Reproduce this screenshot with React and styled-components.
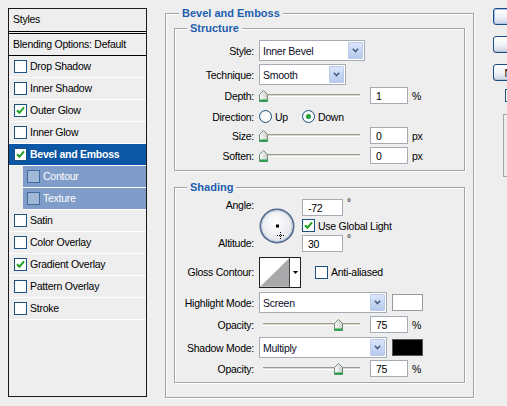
import React from 'react';
import styled, { createGlobalStyle } from 'styled-components';

const Global = createGlobalStyle`
  html, body { margin: 0; padding: 0; background: #eeeeee; overflow: hidden; }
  body { font-family: "Liberation Sans", Arial, sans-serif; font-size: 10.5px; letter-spacing: -0.25px; color: #000; }
  #root { width: 507px; height: 406px; overflow: hidden; }
`;

const Page = styled.div`
  display: flex;
  align-items: flex-start;
  width: 507px;
  height: 406px;
  overflow: hidden;
  background: #eeeeee;
`;

/* ---------- left styles list ---------- */
const StylesPanel = styled.div`
  margin: 8px 0 0 8px;
  width: 139px;
  height: 389px;
  flex: none;
  box-sizing: border-box;
  border: 1px solid #1a1a1a;
  display: flex;
  flex-direction: column;
`;

const HeadRow = styled.div`
  height: ${p => (p.$double ? 25 : 22)}px;
  box-sizing: border-box;
  padding: 0 0 ${p => (p.$double ? 2 : 1)}px 4px;
  display: flex;
  align-items: center;
  border-bottom: ${p => (p.$double ? '3px double #000' : '1px solid #000')};
  white-space: nowrap;
`;

const ListRow = styled.div`
  height: 22px;
  box-sizing: border-box;
  border-bottom: 1px solid #ffffff;
  display: flex;
  align-items: center;
  gap: 3px;
  padding-left: ${p => (p.$sub ? 4 : 5)}px;
  padding-bottom: 1px;
  margin-left: ${p => (p.$sub ? 14 : 0)}px;
  background: ${p => (p.$selected ? '#0b56a5' : p.$sub ? '#7f9dc8' : 'transparent')};
  color: ${p => (p.$selected || p.$sub ? '#ffffff' : '#000')};
  font-weight: ${p => (p.$selected ? 'bold' : 'normal')};
  white-space: nowrap;
`;

const CheckBox = styled.span`
  width: 13px;
  height: 13px;
  flex: none;
  box-sizing: border-box;
  border: 1px solid ${p => (p.$dim ? '#3e6aa0' : '#1c5180')};
  background: ${p => (p.$dim ? 'rgba(255,255,255,0.28)' : '#ffffff')};
  display: flex;
  align-items: center;
  justify-content: center;
`;

const Tick = () => (
  <svg width="9" height="9" viewBox="0 0 9 9">
    <path d="M1 4.2 L3.4 6.8 L8 1.4" fill="none" stroke="#1fa01f" strokeWidth="2" />
  </svg>
);

const Check = ({ checked, dim }) => (
  <CheckBox $dim={dim}>{checked && <Tick />}</CheckBox>
);

/* ---------- group boxes ---------- */
const Group = styled.fieldset`
  box-sizing: border-box;
  margin: 0;
  min-width: 0;
  border: 1px solid #a3a3a3;
  box-shadow: inset 1px 1px 0 #ffffff, 1px 1px 0 #ffffff;
`;

const MainGroup = styled(Group)`
  flex: none;
  margin: 6px 0 0 18px;
  width: 309px;
  height: 392px;
  padding: 0 8px;
`;

const SubGroup = styled(Group)`
  width: 100%;
  height: ${p => p.$h}px;
  margin-top: ${p => p.$mt}px;
  padding: 0;
`;

const Title = styled.legend`
  color: #1e5eae;
  font-weight: bold;
  font-size: 11px;
  letter-spacing: 0;
  line-height: 14px;
  padding: 0 3px;
  margin-left: ${p => p.$ml}px;
  background: #eeeeee;
`;

const Row = styled.div`
  display: flex;
  align-items: center;
  height: ${p => p.$h}px;
  margin-top: ${p => p.$mt}px;
`;

const Label = styled.span`
  width: 79px;
  margin-right: 5px;
  flex: none;
  text-align: right;
  white-space: nowrap;
`;

/* select */
const SelectBox = styled.div`
  width: ${p => p.$w}px;
  height: 21px;
  flex: none;
  box-sizing: border-box;
  border: 1px solid #a5acb5;
  background: #fff;
  display: flex;
  align-items: stretch;
`;
const SelectText = styled.span`
  flex: 1;
  padding-left: 3px;
  display: flex;
  align-items: center;
  color: #0c0c2a;
`;
const DropBtn = styled.span`
  width: 15px;
  margin: 1px;
  box-sizing: border-box;
  border: 1px solid #b9cbe8;
  border-radius: 1px;
  background: linear-gradient(#dbe6fa, #b6caee);
  display: flex;
  align-items: center;
  justify-content: center;
`;
const Chevron = () => (
  <svg width="7" height="5" viewBox="0 0 7 5">
    <path d="M0.8 0.8 L3.5 3.6 L6.2 0.8" fill="none" stroke="#4a5d82" strokeWidth="1.6" />
  </svg>
);
const Select = ({ w, children }) => (
  <SelectBox $w={w}>
    <SelectText>{children}</SelectText>
    <DropBtn><Chevron /></DropBtn>
  </SelectBox>
);

/* numeric field */
const Field = styled.div`
  width: ${p => p.$w}px;
  height: 17px;
  flex: none;
  box-sizing: border-box;
  border: 1px solid #a5acb5;
  background: #fff;
  padding-left: 5px;
  display: flex;
  align-items: center;
`;
const Unit = styled.span`
  margin-left: 4px;
  align-self: ${p => (p.$sup ? 'flex-start' : 'center')};
  font-size: ${p => (p.$sup ? '10px' : 'inherit')};
  margin-top: ${p => (p.$sup ? '-2px' : '0')};
`;

/* slider */
const Slider = styled.div`
  position: relative;
  width: 101px;
  height: 17px;
  flex: none;
  margin-right: 10px;
`;
const Track = styled.div`
  position: absolute;
  left: 4px;
  right: 0;
  top: 7px;
  height: 3px;
  box-sizing: border-box;
  border-top: 1px solid #9c9c93;
  border-bottom: 1px solid #ffffff;
  background: #d8d8cf;
`;
const ThumbWrap = styled.div`
  position: absolute;
  top: 3px;
  width: 9px;
  height: 12px;
`;
const Thumb = ({ pct }) => (
  <ThumbWrap style={{ left: `${4 + pct - 4.5}px` }}>
    <svg width="9" height="12" viewBox="0 0 9 12">
      <defs>
        <linearGradient id="tg" x1="0" y1="0" x2="1" y2="0">
          <stop offset="0" stopColor="#ffffff" />
          <stop offset="1" stopColor="#c9cdc9" />
        </linearGradient>
      </defs>
      <path d="M4.5 0.5 L8.5 4.5 L8.5 11.5 L0.5 11.5 L0.5 4.5 Z" fill="url(#tg)" stroke="#6f8a78" />
      <rect x="0.5" y="9.5" width="8" height="2" fill="#21a34a" />
    </svg>
  </ThumbWrap>
);

const SliderRow = ({ label, pct, value, unit, mt }) => (
  <Row $h={17} $mt={mt}>
    <Label>{label}</Label>
    <Slider>
      <Track />
      <Thumb pct={pct} />
    </Slider>
    <Field $w={38}>{value}</Field>
    <Unit>{unit}</Unit>
  </Row>
);

/* radio */
const RadioCircle = styled.span`
  width: 13px;
  height: 13px;
  flex: none;
  box-sizing: border-box;
  border: 1px solid #1c5180;
  border-radius: 50%;
  background: radial-gradient(circle at 60% 60%, #ffffff, #ececec);
  display: flex;
  align-items: center;
  justify-content: center;
  margin-right: 3px;
`;
const RadioDot = styled.span`
  width: 5px;
  height: 5px;
  border-radius: 50%;
  background: #22a03a;
`;
const RadioText = styled.span`
  margin-right: ${p => p.$gap}px;
`;

/* check with text */
const CheckLine = styled.div`
  display: flex;
  align-items: center;
  gap: ${p => p.$gap}px;
  margin-left: ${p => p.$ml || 0}px;
  margin-top: ${p => p.$mt || 0}px;
  white-space: nowrap;
`;

/* angle block */
const AngleBlock = styled.div`
  display: flex;
  height: 53px;
  margin-top: ${p => p.$mt}px;
`;
const LabelCol = styled.div`
  width: 79px;
  margin-right: 5px;
  flex: none;
  display: flex;
  flex-direction: column;
  justify-content: space-between;
  align-items: flex-end;
  padding: 0 0 3px;
  box-sizing: border-box;
`;
const Dial = styled.div`
  width: 36px;
  height: 36px;
  align-self: center;
  margin-right: 7px;
  flex: none;
`;
const FieldCol = styled.div`
  display: flex;
  flex-direction: column;
  justify-content: space-between;
`;
const FieldLine = styled.div`
  display: flex;
  height: 17px;
`;

/* contour swatch */
const ContourBox = styled.div`
  width: 42px;
  height: 31px;
  flex: none;
  box-sizing: border-box;
  border: 1px solid #222;
  background: #fff;
  display: flex;
`;
const ContourArrow = styled.span`
  width: 10px;
  border-left: 1px solid #444;
  display: flex;
  align-items: center;
  justify-content: center;
`;

const Swatch = styled.span`
  width: 31px;
  height: 17px;
  margin-left: 5px;
  flex: none;
  box-sizing: border-box;
  border: 1px solid ${p => (p.$color === '#000' ? '#555' : '#9a9a9a')};
  background: ${p => p.$color};
`;

/* right column */
const RightCol = styled.div`
  flex: none;
  margin-left: 19px;
  display: flex;
  flex-direction: column;
  align-items: flex-start;
`;
const Button = styled.div`
  width: 76px;
  height: 17px;
  margin-top: ${p => p.$mt}px;
  box-sizing: border-box;
  border: 1px solid #1d4b86;
  border-radius: 3px;
  background: linear-gradient(#ffffff, #eef1f6 55%, #c9d3e3);
  box-shadow: ${p => (p.$default ? 'inset 0 0 0 1px #a9c2ee' : 'inset 0 -1px 0 #b7c1d1')};
  display: flex;
  align-items: center;
  justify-content: center;
  white-space: nowrap;
`;
const PreviewBox = styled.div`
  margin: 12px 0 0 10px;
  width: 70px;
  height: 63px;
  box-sizing: border-box;
  border: 1px solid #a4a4a4;
  background: #ececec;
`;

const items = [
  { label: 'Drop Shadow' },
  { label: 'Inner Shadow' },
  { label: 'Outer Glow', checked: true },
  { label: 'Inner Glow' },
  { label: 'Bevel and Emboss', checked: true, selected: true },
  { label: 'Contour', sub: true },
  { label: 'Texture', sub: true },
  { label: 'Satin' },
  { label: 'Color Overlay' },
  { label: 'Gradient Overlay', checked: true },
  { label: 'Pattern Overlay' },
  { label: 'Stroke' },
];

export default function App() {
  return (
    <>
      <Global />
      <Page>
        <StylesPanel>
          <HeadRow $double>Styles</HeadRow>
          <HeadRow>Blending Options: Default</HeadRow>
          {items.map(it => (
            <ListRow key={it.label} $selected={it.selected} $sub={it.sub}>
              <Check checked={it.checked} dim={it.sub} />
              {it.label}
            </ListRow>
          ))}
        </StylesPanel>

        <MainGroup>
          <Title $ml={5}>Bevel and Emboss</Title>
          <SubGroup $h={150} $mt={1}>
            <Title $ml={12}>Structure</Title>
            <Row $h={21} $mt={5}>
              <Label>Style:</Label>
              <Select w={106}>Inner Bevel</Select>
            </Row>
            <Row $h={21} $mt={3}>
              <Label>Technique:</Label>
              <Select w={87}>Smooth</Select>
            </Row>
            <SliderRow label="Depth:" pct={0} value="1" unit="%" mt={2} />
            <Row $h={19} $mt={3}>
              <Label>Direction:</Label>
              <RadioCircle />
              <RadioText $gap={14}>Up</RadioText>
              <RadioCircle><RadioDot /></RadioCircle>
              <RadioText $gap={0}>Down</RadioText>
            </Row>
            <SliderRow label="Size:" pct={0} value="0" unit="px" mt={1} />
            <SliderRow label="Soften:" pct={0} value="0" unit="px" mt={3} />
          </SubGroup>

          <SubGroup $h={203} $mt={9}>
            <Title $ml={12}>Shading</Title>
            <AngleBlock $mt={5}>
              <LabelCol>
                <span>Angle:</span>
                <span>Altitude:</span>
              </LabelCol>
              <Dial>
                <svg width="36" height="36" viewBox="0 0 36 36">
                  <defs>
                    <radialGradient id="dg" cx="0.45" cy="0.4" r="0.6">
                      <stop offset="0" stopColor="#ffffff" />
                      <stop offset="1" stopColor="#e2e4e8" />
                    </radialGradient>
                  </defs>
                  <circle cx="18" cy="18" r="16.6" fill="url(#dg)" stroke="#586d92" strokeWidth="1.8" />
                  <circle cx="18" cy="18" r="15.2" fill="none" stroke="#c8d2e2" strokeWidth="1" />
                  <rect x="17" y="16.5" width="3" height="3" fill="#000" />
                  <g stroke="#000" strokeWidth="1" strokeDasharray="1 1">
                    <line x1="21.5" y1="24" x2="21.5" y2="31" />
                    <line x1="18" y1="27.5" x2="25" y2="27.5" />
                  </g>
                </svg>
              </Dial>
              <FieldCol>
                <FieldLine>
                  <Field $w={41}>-72</Field>
                  <Unit $sup>°</Unit>
                </FieldLine>
                <CheckLine $gap={3}>
                  <Check checked />
                  Use Global Light
                </CheckLine>
                <FieldLine>
                  <Field $w={41}>30</Field>
                  <Unit $sup>°</Unit>
                </FieldLine>
              </FieldCol>
            </AngleBlock>
            <Row $h={30} $mt={5}>
              <Label>Gloss Contour:</Label>
              <ContourBox>
                <svg width="30" height="29" viewBox="0 0 30 29">
                  <polygon points="0,29 30,0 30,29" fill="#a9a9ab" />
                </svg>
                <ContourArrow>
                  <svg width="5" height="3" viewBox="0 0 5 3"><polygon points="0,0 5,0 2.5,3" fill="#000" /></svg>
                </ContourArrow>
              </ContourBox>
              <CheckLine $gap={3} $ml={14}>
                <Check />
                Anti-aliased
              </CheckLine>
            </Row>
            <Row $h={21} $mt={5}>
              <Label>Highlight Mode:</Label>
              <Select w={128}>Screen</Select>
              <Swatch $color="#fff" />
            </Row>
            <SliderRow label="Opacity:" pct={75} value="75" unit="%" mt={3} />
            <Row $h={21} $mt={4}>
              <Label>Shadow Mode:</Label>
              <Select w={128}>Multiply</Select>
              <Swatch $color="#000" />
            </Row>
            <SliderRow label="Opacity:" pct={75} value="75" unit="%" mt={2} />
          </SubGroup>
        </MainGroup>

        <RightCol>
          <Button $mt={8} $default>OK</Button>
          <Button $mt={11}>Cancel</Button>
          <Button $mt={11}>New Style...</Button>
          <CheckLine $gap={3} $ml={12} $mt={8}>
            <Check checked />
            Preview
          </CheckLine>
          <PreviewBox />
        </RightCol>
      </Page>
    </>
  );
}
